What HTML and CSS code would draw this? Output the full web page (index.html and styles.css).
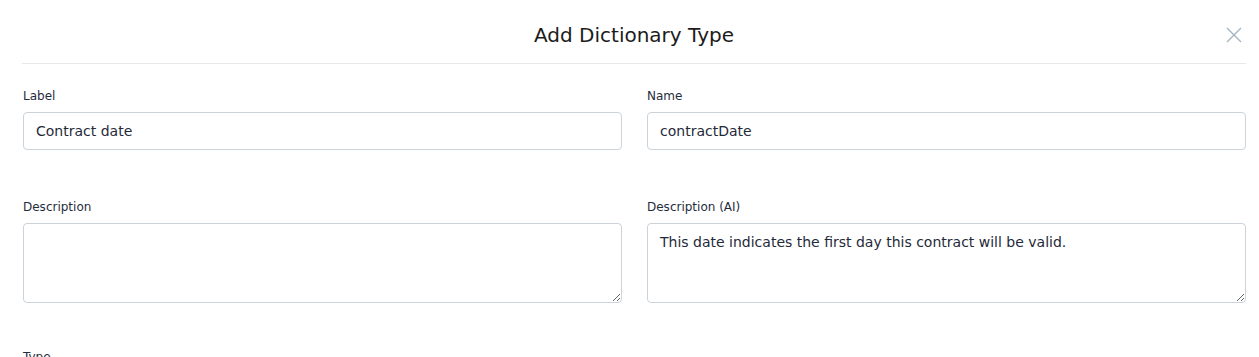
FILE: index.html
```html
<!DOCTYPE html>
<html>
<head>
<meta charset="utf-8">
<link rel="stylesheet" href="styles.css">
</head>
<body>
<div class="modal">
  <div class="modal-header">
    <h2 class="modal-title">Add Dictionary Type</h2>
    <button class="close-btn" aria-label="Close">
      <svg width="16" height="16" viewBox="0 0 16 16"><path d="M1 1L15 15M15 1L1 15" stroke="#a3b5c2" stroke-width="1.4" fill="none"/></svg>
    </button>
  </div>
  <div class="form-grid">
    <div class="field">
      <label class="field-label">Label</label>
      <input class="input" type="text" value="Contract date">
    </div>
    <div class="field">
      <label class="field-label">Name</label>
      <input class="input" type="text" value="contractDate">
    </div>
    <div class="field field-desc">
      <label class="field-label">Description</label>
      <textarea class="textarea"></textarea>
    </div>
    <div class="field field-desc">
      <label class="field-label">Description (AI)</label>
      <textarea class="textarea">This date indicates the first day this contract will be valid.</textarea>
    </div>
    <div class="field field-type">
      <label class="field-label">Type</label>
    </div>
  </div>
</div>
</body>
</html>
```
FILE: styles.css
```css
html, body {
  margin: 0;
  padding: 0;
  background: #ffffff;
}
body {
  font-family: "DejaVu Sans", "Open Sans", sans-serif;
  color: #1f2a3a;
  overflow: hidden;
}
.modal {
  padding: 0 13px 0 22px;
}
.modal-header {
  position: relative;
  height: 63px;
  border-bottom: 1px solid #e6e8eb;
  display: flex;
  align-items: center;
  justify-content: center;
}
.modal-title {
  margin: 0;
  font-size: 20px;
  font-weight: 400;
  color: #1c1c1c;
  padding-top: 6px;
}
.close-btn {
  position: absolute;
  right: 4px;
  top: 27px;
  background: none;
  border: none;
  padding: 0;
  width: 16px;
  height: 16px;
  cursor: pointer;
}
.form-grid {
  display: grid;
  grid-template-columns: 1fr 1fr;
  column-gap: 25px;
  row-gap: 48px;
  padding: 24px 0 0 1px;
}
.field {
  display: flex;
  flex-direction: column;
}
.field-desc {
  margin-top: 1px;
}
.field-type {
  margin-top: -2px;
}
.field-label {
  font-size: 12px;
  color: #1f2d3d;
  line-height: 16px;
  margin-bottom: 8px;
}
.input, .textarea {
  font-family: inherit;
  font-size: 14px;
  color: #1f2a3a;
  border: 1px solid #ccd3da;
  border-radius: 4px;
  box-sizing: border-box;
  padding: 0 12px;
  margin: 0;
  outline: none;
  background: #fff;
}
.input {
  height: 38px;
}
.textarea {
  height: 80px;
  padding: 9px 12px;
  resize: vertical;
  line-height: 18px;
}
```
